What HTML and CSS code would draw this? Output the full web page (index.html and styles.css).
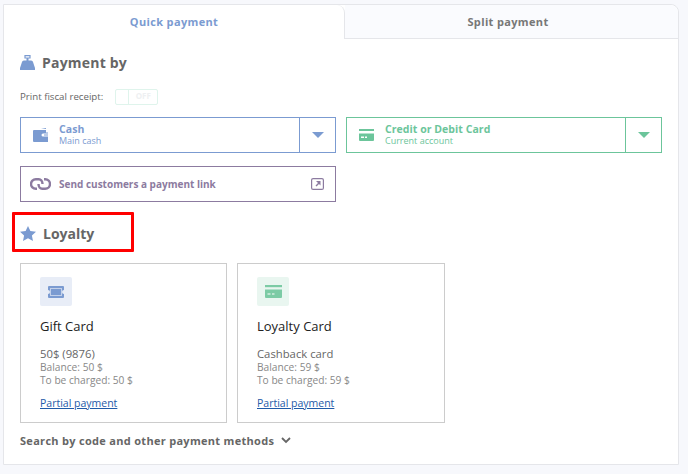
FILE: index.html
```html
<!DOCTYPE html>
<html lang="en">
<head>
    <meta charset="UTF-8">
    <meta name="viewport" content="width=device-width, initial-scale=1.0">
    <title>Payment</title>
    <link rel="stylesheet" href="styles.css">
</head>
<body>

    <div class="panel">
        <div class="tabs">
            <div class="tab active">Quick payment</div>
            <div class="tab">Split payment</div>
        </div>

        <div class="content">
            <h2 class="title title-pay">
                <svg width="15" height="15" viewBox="0 0 15 15">
                    <path fill="#7b9bd1" d="M4 5.500h7c1.500 0 2 1 2.500 3L15 13v2H0v-2l1.500-4.500C2 6.500 2.500 5.500 4 5.500z"/>
                    <path fill="#7b9bd1" d="M6.500 3h2v3h-2z"/>
                    <path fill="none" stroke="#7b9bd1" stroke-width="1.200" d="M5 .6h5v2.400H5z"/>
                </svg>
                Payment by
            </h2>

            <div class="fiscal">
                <span class="fiscal-label">Print fiscal receipt:</span>
                <div class="switch">
                    <span class="switch-knob"></span>
                    <span class="switch-text">OFF</span>
                </div>
            </div>

            <div class="methods">
                <div class="method blue">
                    <div class="method-main">
                        <svg width="15" height="14" viewBox="0 0 15 14">
                            <path fill="#7b9bd1" d="M8 1l5-1v1z"/>
                            <path fill="#7b9bd1" d="M1 2h12v2.500h2V5.500h-5a1.500 1.500 0 0 0 0 3h5V14H1a1 1 0 0 1-1-1V3a1 1 0 0 1 1-1z"/>
                            <path fill="#7b9bd1" d="M11 6.500h4v1h-4z"/>
                        </svg>
                        <div>
                            <div class="method-name">Cash</div>
                            <div class="method-sub">Main cash</div>
                        </div>
                    </div>
                    <div class="method-arrow"><span class="arrow"></span></div>
                </div>
                <div class="method green">
                    <div class="method-main">
                        <svg width="15" height="12" viewBox="0 0 15 12">
                            <path fill="#6cc59b" d="M0 0h15v2H0z"/>
                            <path fill="#6cc59b" d="M0 4.500h15V11a1 1 0 0 1-1 1H1a1 1 0 0 1-1-1z"/>
                            <path fill="#fff" d="M2 7.500h3V9H2zM6 7.500h2V9H6z"/>
                        </svg>
                        <div>
                            <div class="method-name">Credit or Debit Card</div>
                            <div class="method-sub">Current account</div>
                        </div>
                    </div>
                    <div class="method-arrow"><span class="arrow"></span></div>
                </div>
            </div>

            <div class="pay-link">
                <svg width="21" height="12" viewBox="0 0 21 12">
                    <path fill="none" stroke="#8c7ba0" stroke-width="2.400" d="M7 10.800H5.800a4.800 4.800 0 0 1 0-9.600h3c2 0 3.700 2 3.700 4.800"/>
                    <path fill="none" stroke="#8c7ba0" stroke-width="2.400" d="M14 1.200h1.200a4.800 4.800 0 0 1 0 9.600h-3c-2 0-3.700-2-3.700-4.800"/>
                </svg>
                <span class="pay-link-text">Send customers a payment link</span>
                <svg width="13" height="12" viewBox="0 0 13 12">
                    <rect x="0.600" y="0.600" width="11.800" height="10.800" rx="1.500" fill="none" stroke="#8c7ba0" stroke-width="1.200"/>
                    <path fill="#8c7ba0" d="M5 3h4.500v4.500L8 6 5.500 8.500l-1-1L7 5z"/>
                </svg>
            </div>

            <h2 class="title title-loyalty">
                <svg width="16" height="15" viewBox="0 0 16 15">
                    <path fill="#7b9bd1" d="M8 0l2.400 5 5.600.7-4.100 3.800 1.100 5.500L8 12.300 3 15l1.100-5.500L0 5.700 5.600 5z"/>
                </svg>
                Loyalty
            </h2>

            <div class="cards">
                <div class="card">
                    <div class="card-icon icon-blue">
                        <svg width="16" height="12" viewBox="0 0 16 12">
                            <path fill="#7b9bd1" d="M1 0h14a1 1 0 0 1 1 1v3a2 2 0 0 0 0 4v3a1 1 0 0 1-1 1H1a1 1 0 0 1-1-1V8a2 2 0 0 0 0-4V1a1 1 0 0 1 1-1z"/>
                            <rect x="2.500" y="2.500" width="11" height="7" fill="#7b9bd1" stroke="#c3d1ea"/>
                        </svg>
                    </div>
                    <div class="card-name">Gift Card</div>
                    <div class="card-desc">50$ (9876)</div>
                    <div class="card-line">Balance: 50 $</div>
                    <div class="card-line">To be charged: 50 $</div>
                    <a class="card-link" href="#">Partial payment</a>
                </div>
                <div class="card wide">
                    <div class="card-icon icon-green">
                        <svg width="17" height="13" viewBox="0 0 17 13">
                            <path fill="#7ccba5" d="M0 0h17v2.200H0z"/>
                            <path fill="#7ccba5" d="M0 4.500h17V12a1 1 0 0 1-1 1H1a1 1 0 0 1-1-1z"/>
                            <path fill="#fff" d="M2.500 8.500h3v1h-3zM7 8.500h2.500v1H7z"/>
                        </svg>
                    </div>
                    <div class="card-name">Loyalty Card</div>
                    <div class="card-desc">Cashback card</div>
                    <div class="card-line">Balance: 59 $</div>
                    <div class="card-line">To be charged: 59 $</div>
                    <a class="card-link" href="#">Partial payment</a>
                </div>
            </div>

            <div class="search-more">
                Search by code and other payment methods
                <svg width="10" height="7" viewBox="0 0 10 7">
                    <path fill="none" stroke="#666" stroke-width="1.800" d="M1 1l4 4 4-4"/>
                </svg>
            </div>
        </div>
    </div>

    <div class="highlight"></div>

</body>
</html>
```

FILE: styles.css
```css
body {
    margin: 0;
    padding: 4px 9px 9px 3px;
    background-color: #f7f8fc;
    font-family: "Open Sans", Arial, sans-serif;
    color: #666;
    position: relative;
}

.panel {
    background-color: #fff;
    border: 1px solid #e5e6ea;
    border-radius: 0 8px 0 0;
    height: 461px;
    box-sizing: border-box;
}

.tabs {
    display: flex;
    height: 34px;
}

.tab {
    flex: 1;
    padding-right: 7px;
    text-align: center;
    font-size: 11px;
    font-weight: 700;
    line-height: 34px;
    letter-spacing: 0.35px;
    color: #777;
    background-color: #fafbfe;
    border-bottom: 1px solid #e5e6ea;
    border-radius: 0 8px 0 0;
    box-sizing: border-box;
}

.tab.active {
    flex: none;
    width: 341px;
    padding-right: 0;
    color: #7b9bd1;
    background-color: #fff;
    border: none;
    border-right: 1px solid #e5e6ea;
}

.content {
    padding: 0 16px;
}

.title {
    display: flex;
    align-items: center;
    margin: 0;
    font-size: 14px;
    font-weight: 700;
    color: #666;
}

.title-pay {
    height: 20px;
    margin-top: 13px;
    letter-spacing: 0.2px;
    gap: 7px;
}

.fiscal {
    display: flex;
    align-items: center;
    margin-top: 17px;
    height: 16px;
    font-size: 9.700px;
    color: #666;
    gap: 12px;
}

.fiscal-label {
    padding-bottom: 2px;
}

.switch {
    display: flex;
    width: 43px;
    height: 16px;
    border: 1px solid #dff4ec;
    border-radius: 2px;
    box-sizing: border-box;
}

.switch-knob {
    width: 12px;
    border-right: 1px solid #dff4ec;
}

.switch-text {
    flex: 1;
    text-align: center;
    font-size: 8px;
    font-weight: 700;
    line-height: 12px;
    color: #eef0f2;
}

.methods {
    display: flex;
    gap: 10px;
    margin-top: 12px;
}

.method {
    display: flex;
    width: 316px;
    height: 36px;
    border: 1px solid;
    box-sizing: border-box;
}

.method.blue {
    border-color: #7b9bd1;
    color: #7b9bd1;
}

.method.green {
    border-color: #6cc59b;
    color: #6cc59b;
}

.method-main {
    flex: 1;
    display: flex;
    align-items: center;
    gap: 11px;
    padding-left: 12px;
}

.method-name {
    font-size: 10.500px;
    font-weight: 700;
    line-height: 12px;
    letter-spacing: 0.05px;
}

.method-sub {
    font-size: 9px;
    line-height: 12px;
}

.method-arrow {
    width: 35px;
    display: flex;
    align-items: center;
    justify-content: center;
    border-left: 1px solid;
}

.arrow {
    width: 0;
    height: 0;
    border-left: 6px solid transparent;
    border-right: 6px solid transparent;
    border-top: 6px solid;
}

.pay-link {
    display: flex;
    align-items: center;
    width: 316px;
    height: 36px;
    margin-top: 13px;
    padding: 0 11px 0 9px;
    border: 1px solid #8c7ba0;
    box-sizing: border-box;
    gap: 8px;
    color: #8c7ba0;
}

.pay-link-text {
    flex: 1;
    font-size: 10px;
    font-weight: 700;
}

.title-loyalty {
    height: 20px;
    margin-top: 21px;
    gap: 7px;
}

.cards {
    display: flex;
    gap: 10px;
    margin-top: 20px;
}

.card {
    width: 207px;
    height: 160px;
    padding: 13px 19px;
    border: 1px solid #ccc;
    box-sizing: border-box;
}

.card.wide {
    width: 208px;
}

.card-icon {
    display: flex;
    align-items: center;
    justify-content: center;
    width: 32px;
    height: 29px;
    border-radius: 2px;
}

.icon-blue {
    background-color: #e8edf7;
}

.icon-green {
    background-color: #e9f6f0;
}

.card-name {
    margin-top: 12px;
    font-size: 13px;
    line-height: 16px;
    color: #222;
}

.card-desc {
    margin-top: 12px;
    font-size: 11.300px;
    line-height: 15px;
    color: #666;
}

.card-line {
    font-size: 10.200px;
    line-height: 13px;
    color: #888;
}

.card-link {
    display: inline-block;
    margin-top: 9px;
    font-size: 10.500px;
    line-height: 14px;
    color: #1f5aa8;
    text-decoration: underline;
}

.search-more {
    display: flex;
    align-items: center;
    gap: 7px;
    margin-top: 10px;
    font-size: 11px;
    font-weight: 700;
    letter-spacing: 0.3px;
    line-height: 15px;
    color: #666;
}

/* annotation drawn over the page */
.highlight {
    position: absolute;
    left: 12px;
    top: 212px;
    width: 122px;
    height: 40px;
    border: 3px solid #f00;
    border-radius: 1px;
    box-sizing: border-box;
}
```
